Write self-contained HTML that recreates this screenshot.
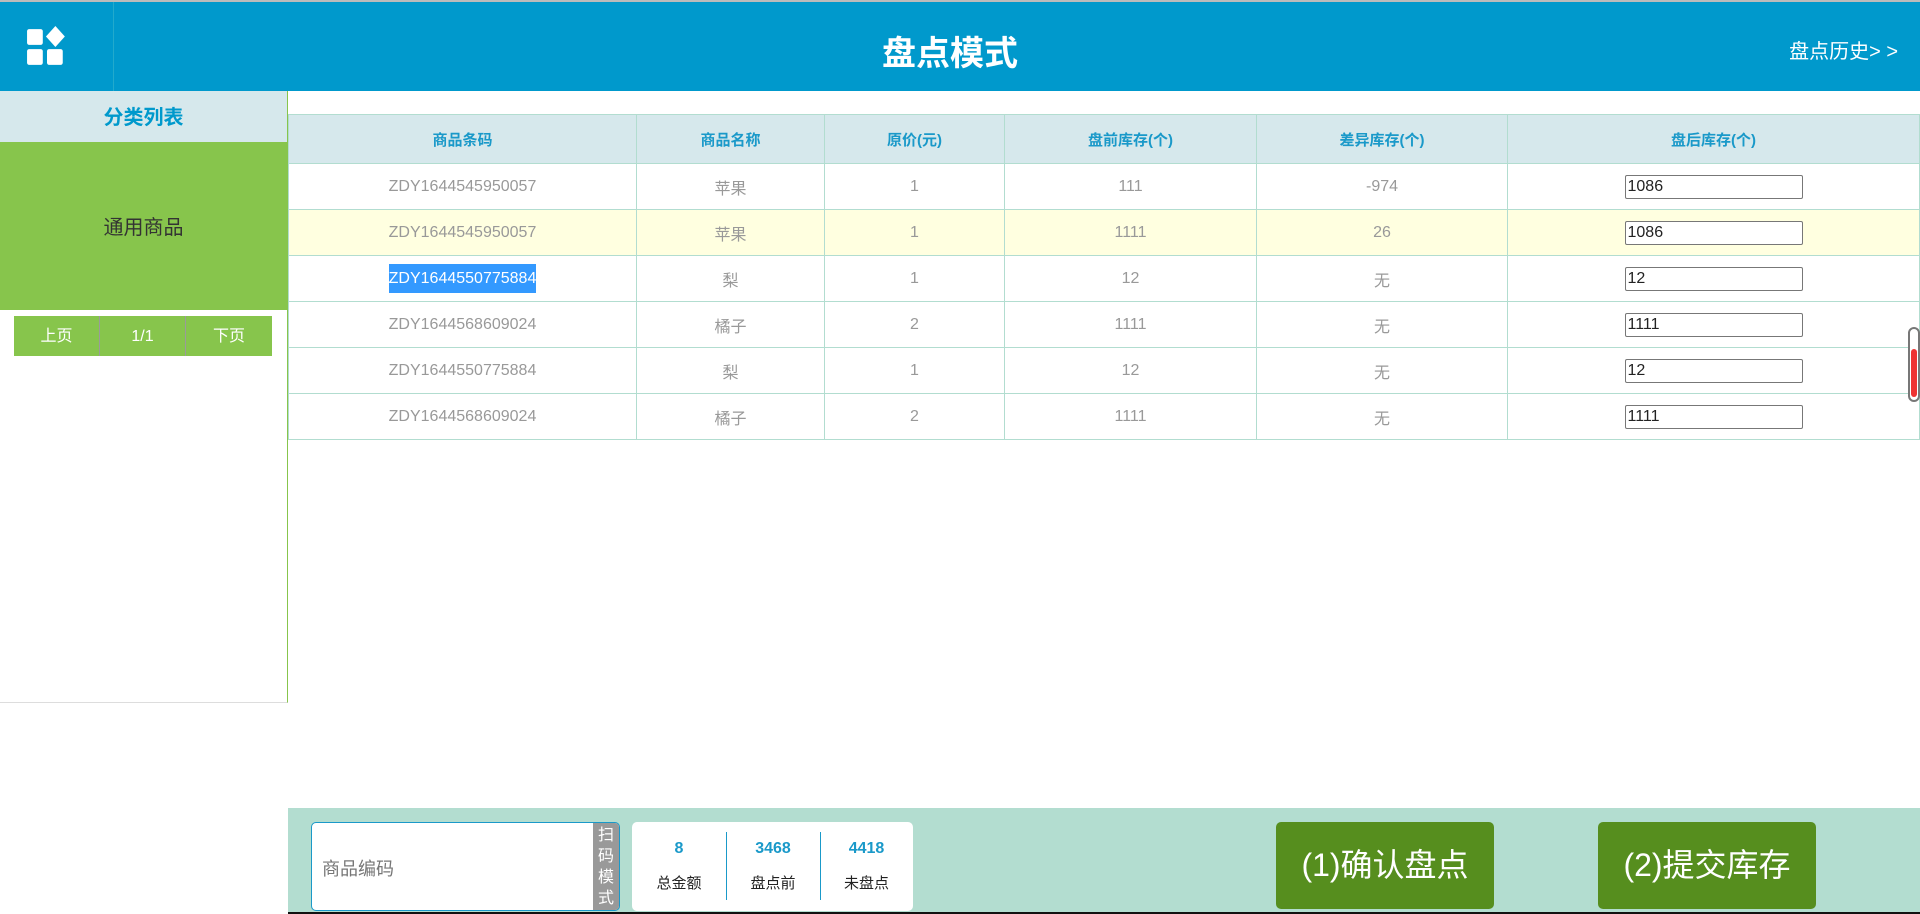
<!DOCTYPE html>
<html><head><meta charset="utf-8"><style>
*{margin:0;padding:0;box-sizing:border-box}
body{width:1920px;height:914px;overflow:hidden;background:#fff;font-family:"Liberation Sans","Noto Sans CJK SC",sans-serif;position:relative}
.abs{position:absolute}
.hdr{left:0;top:0;width:1920px;height:91px;background:#0099cc;border-top:2px solid #bbb}
.hdr .sep{left:113px;top:0;width:1px;height:89px;background:#22aacc}
.title{left:-10px;width:1920px;top:24px;text-align:center;color:#fff;font-size:34px;font-weight:bold}
.hist{right:22px;top:33px;color:#fff;font-size:20px}
.side{left:0;top:91px;width:288px;height:612px;border-right:1px solid #87c54c;border-bottom:1px solid #ddd}
.sh{left:0;top:0;width:287px;height:51px;background:#d6e8ec;color:#0099cc;font-weight:bold;font-size:20px;text-align:center;line-height:54px}
.sg{left:0;top:51px;width:287px;height:168px;background:#87c54c;color:#333;font-size:20px;text-align:center;line-height:172px}
.pg{top:225px;height:40px;background:#87c54c;color:#fff;font-size:16px;text-align:center;line-height:42px;border-right:1px solid #9a9a9a}
table{position:absolute;left:288px;top:114px;width:1632px;border-collapse:collapse;table-layout:fixed}
td,th{border:1px solid #b2ddd0;text-align:center;font-size:16px;color:#999;font-weight:normal;height:46px}
th{background:#d6e8ec;color:#1a99c9;font-weight:bold;height:49px;font-size:15px}
tr.y td{background:#ffffe0}
input{width:178px;height:24px;border:1px solid #777;border-radius:2px;font-size:16px;padding-left:2px;color:#222;font-family:"Liberation Sans",sans-serif}
.sel{background:#3399ff;color:#fff;padding:6px 0}
.bot{left:288px;top:808px;width:1632px;height:106px;background:#b3ddd0;border-bottom:2px solid #111}
.btn{top:14px;width:218px;height:87px;background:#568e1e;border-radius:5px;color:#fff;font-size:32px;text-align:center;line-height:87px}
</style></head><body>
<div class="abs hdr">
 <div class="abs sep"></div>
 <svg class="abs" style="left:26px;top:24px" width="42" height="42" viewBox="0 0 40 40"><rect x="1" y="3" width="15" height="15" rx="2" fill="#fff"/><path d="M28 0 L37 10 L28 20 L19 10Z" fill="#fff"/><rect x="1" y="22" width="15" height="15" rx="2" fill="#fff"/><rect x="20" y="22" width="15" height="15" rx="2" fill="#fff"/></svg>
 <div class="abs title">盘点模式</div>
 <div class="abs hist">盘点历史&gt; &gt;</div>
</div>
<div class="abs side">
 <div class="abs sh">分类列表</div>
 <div class="abs sg">通用商品</div>
 <div class="abs pg" style="left:14px;width:86px">上页</div>
 <div class="abs pg" style="left:100px;width:86px">1/1</div>
 <div class="abs pg" style="left:186px;width:86px;border-right:none">下页</div>
</div>
<table>
<colgroup><col style="width:348px"><col style="width:188px"><col style="width:180px"><col style="width:252px"><col style="width:251px"><col></colgroup>
<tr><th>商品条码</th><th>商品名称</th><th>原价(元)</th><th>盘前库存(个)</th><th>差异库存(个)</th><th>盘后库存(个)</th></tr>
<tr><td>ZDY1644545950057</td><td>苹果</td><td>1</td><td>111</td><td>-974</td><td><input value="1086"></td></tr>
<tr class="y"><td>ZDY1644545950057</td><td>苹果</td><td>1</td><td>1111</td><td>26</td><td><input value="1086"></td></tr>
<tr><td><span class="sel">ZDY1644550775884</span></td><td>梨</td><td>1</td><td>12</td><td>无</td><td><input value="12"></td></tr>
<tr><td>ZDY1644568609024</td><td>橘子</td><td>2</td><td>1111</td><td>无</td><td><input value="1111"></td></tr>
<tr><td>ZDY1644550775884</td><td>梨</td><td>1</td><td>12</td><td>无</td><td><input value="12"></td></tr>
<tr><td>ZDY1644568609024</td><td>橘子</td><td>2</td><td>1111</td><td>无</td><td><input value="1111"></td></tr>
</table>
<div class="abs" style="left:1908px;top:327px;width:12px;height:75px;border:2px solid #777;border-radius:6px;background:#fff"><div style="margin:20px 1px 0;height:48px;background:#e33;border-radius:3px"></div></div>
<div class="abs bot">
 <div class="abs" style="left:23px;top:14px;width:309px;height:89px;background:#fff;border:1px solid #1a99c9;border-radius:5px;overflow:hidden">
  <div class="abs" style="left:10px;top:32px;font-size:18px;color:#777">商品编码</div>
  <div class="abs" style="right:0;top:0;width:26px;height:89px;background:#999;color:#fff;font-size:16px;line-height:21px;text-align:center;padding-top:2px">扫<br>码<br>模<br>式</div>
 </div>
 <div class="abs" style="left:344px;top:14px;width:281px;height:89px;background:#fff;border-radius:5px">
  <div class="abs" style="left:0;top:18px;width:94px;text-align:center;color:#1a99c9;font-weight:bold;font-size:16px">8</div>
  <div class="abs" style="left:0;top:50px;width:94px;text-align:center;color:#222;font-size:15px">总金额</div>
  <div class="abs" style="left:94px;top:10px;width:1px;height:68px;background:#1a99c9"></div>
  <div class="abs" style="left:94px;top:18px;width:94px;text-align:center;color:#1a99c9;font-weight:bold;font-size:16px">3468</div>
  <div class="abs" style="left:94px;top:50px;width:94px;text-align:center;color:#222;font-size:15px">盘点前</div>
  <div class="abs" style="left:188px;top:10px;width:1px;height:68px;background:#1a99c9"></div>
  <div class="abs" style="left:188px;top:18px;width:93px;text-align:center;color:#1a99c9;font-weight:bold;font-size:16px">4418</div>
  <div class="abs" style="left:188px;top:50px;width:93px;text-align:center;color:#222;font-size:15px">未盘点</div>
 </div>
 <div class="abs btn" style="left:988px">(1)确认盘点</div>
 <div class="abs btn" style="left:1310px">(2)提交库存</div>
</div>
</body></html>
